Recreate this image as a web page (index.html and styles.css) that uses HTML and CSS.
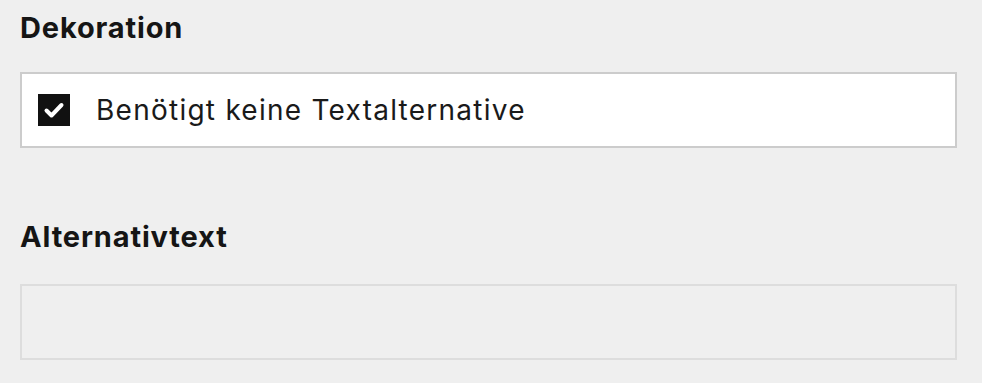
FILE: index.html
```html
<!DOCTYPE html>
<html lang="de">
<head>
<meta charset="utf-8">
<link rel="stylesheet" href="styles.css">
</head>
<body>
<div class="panel">
  <section class="field">
    <h2 class="label">Dekoration</h2>
    <label class="check-box">
      <span class="checkbox" aria-hidden="true">
        <svg viewBox="0 0 32 32" width="32" height="32"><path d="M8.5 16.5 L13.5 21.5 L23.5 11" fill="none" stroke="#fff" stroke-width="4" stroke-linecap="round" stroke-linejoin="round"/></svg>
      </span>
      <span class="check-text">Benötigt keine Textalternative</span>
    </label>
  </section>
  <section class="field field-alt">
    <h2 class="label">Alternativtext</h2>
    <div class="input-box"></div>
  </section>
</div>
</body>
</html>
```
FILE: styles.css
```css
html, body {
  margin: 0;
  padding: 0;
  background: #efefef;
}
body {
  font-family: Inter, "Noto Sans", sans-serif;
  color: #1e1e1e;
}
.panel {
  padding: 11px 25px 0 20px;
}
.field {
  display: flex;
  flex-direction: column;
}
.label {
  margin: 0 0 27px 0;
  font-size: 29px;
  font-weight: 700;
  line-height: 34px;
  letter-spacing: 0.85px;
  color: #151515;
}
.check-box {
  display: flex;
  align-items: center;
  gap: 26px;
  height: 76px;
  box-sizing: border-box;
  border: 2px solid #cccccc;
  background: #ffffff;
  padding-left: 16px;
}
.checkbox {
  width: 32px;
  height: 32px;
  background: #111111;
  display: flex;
  align-items: center;
  justify-content: center;
}
.check-text {
  font-size: 28px;
  line-height: 34px;
  letter-spacing: 1.25px;
  color: #1a1a1a;
}
.field-alt {
  margin-top: 72px;
}
.field-alt .label {
  margin-bottom: 30px;
}
.input-box {
  height: 76px;
  box-sizing: border-box;
  border: 2px solid #dddddd;
  background: #efefef;
}
```
